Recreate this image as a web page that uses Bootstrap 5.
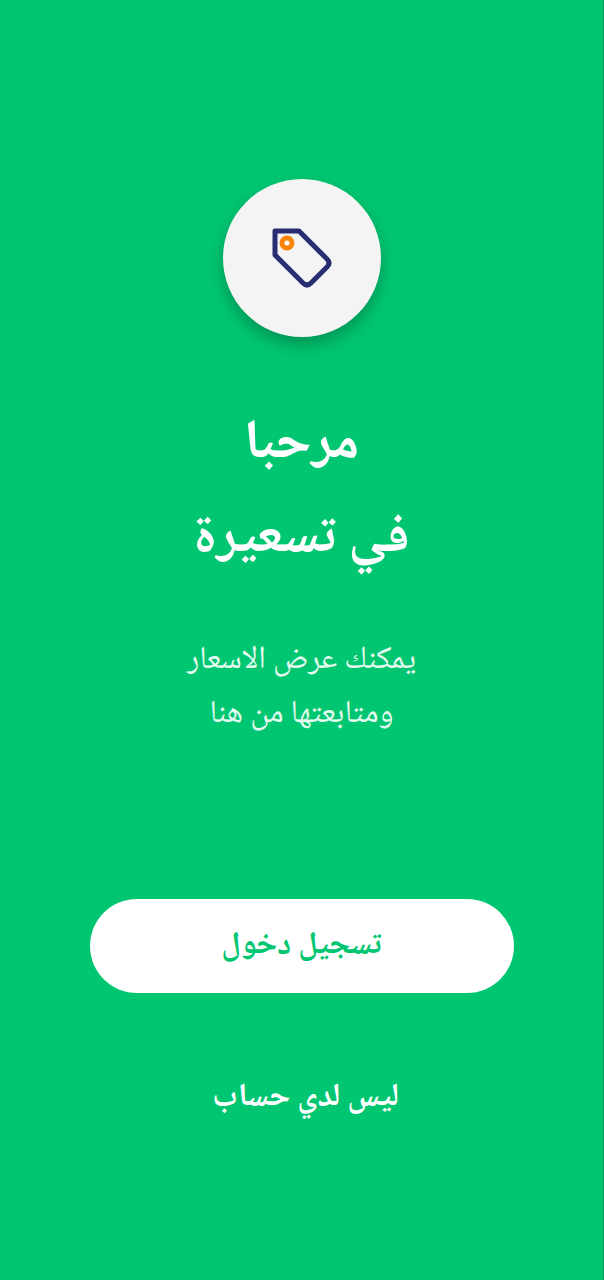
<!DOCTYPE html>
<html lang="ar" dir="rtl">
<head>
<meta charset="utf-8">
<meta name="viewport" content="width=device-width, initial-scale=1">
<title>تسعيرة</title>
<link href="https://cdn.jsdelivr.net/npm/bootstrap@5.3.0/dist/css/bootstrap.min.css" rel="stylesheet">
<style>
body{background:#01c671;font-family:"Noto Naskh Arabic UI","Noto Naskh Arabic","Noto Sans Arabic","Noto Sans",sans-serif;}
.welcome{border-right:1px solid #04965a}
.brand-disc{width:158px;height:158px;background:#f4f4f4;box-shadow:0 8px 16px rgba(0,0,0,.25);margin-top:179px}
.title{font-size:55px;line-height:94px;font-weight:700;margin-top:60px}
.intro{font-size:32px;line-height:54px;margin-top:48px;color:#e4faef}
.btn-login{width:100%;max-width:424px;height:94px;font-size:32px;line-height:48px;font-weight:700;color:#01c671;margin-top:158px}
.btn-login:hover{background:#fff}
.signup{font-size:32px;line-height:54px;font-weight:700;margin-top:78px}
</style>
</head>
<body>
<main class="welcome d-flex flex-column align-items-center text-center text-white min-vh-100 px-5">
<div class="brand-disc rounded-circle d-flex align-items-center justify-content-center">
<svg width="80" height="80" viewBox="0 0 80 80" fill="none" aria-hidden="true"><path d="M13 13H37L65 41Q69 45 65 49L49 65Q45 69 41 65L13 37Z" stroke="#282c70" stroke-width="5" stroke-linejoin="round"/><circle cx="25" cy="25" r="5" fill="#fff" stroke="#f98508" stroke-width="5"/></svg>
</div>
<h1 class="title mb-0">مرحبا<br>في تسعيرة</h1>
<p class="intro mb-0">يمكنك عرض الاسعار<br>ومتابعتها من هنا</p>
<button type="button" class="btn btn-light bg-white border-0 rounded-pill btn-login">تسجيل دخول</button>
<a href="#" class="signup ps-2 text-white text-decoration-none">ليس لدي حساب</a>
</main>
<script src="https://cdn.jsdelivr.net/npm/bootstrap@5.3.0/dist/js/bootstrap.bundle.min.js"></script>
</body>
</html>
